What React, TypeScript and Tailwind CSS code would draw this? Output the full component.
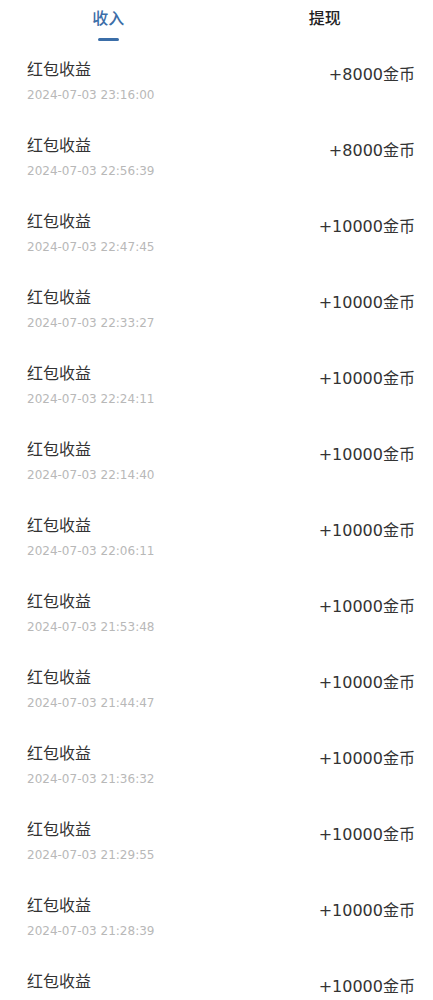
import React from 'react';

const records = [
  { time: '2024-07-03 23:16:00', amount: 8000 },
  { time: '2024-07-03 22:56:39', amount: 8000 },
  { time: '2024-07-03 22:47:45', amount: 10000 },
  { time: '2024-07-03 22:33:27', amount: 10000 },
  { time: '2024-07-03 22:24:11', amount: 10000 },
  { time: '2024-07-03 22:14:40', amount: 10000 },
  { time: '2024-07-03 22:06:11', amount: 10000 },
  { time: '2024-07-03 21:53:48', amount: 10000 },
  { time: '2024-07-03 21:44:47', amount: 10000 },
  { time: '2024-07-03 21:36:32', amount: 10000 },
  { time: '2024-07-03 21:29:55', amount: 10000 },
  { time: '2024-07-03 21:28:39', amount: 10000 },
  { time: '2024-07-03 21:20:15', amount: 10000 },
];

export default function App() {
  return (
    <div
      className="w-[433px] h-[1000px] overflow-hidden bg-white"
      style={{ fontFamily: '"DejaVu Sans", "Noto Sans CJK SC", sans-serif' }}
    >
      {/* Tabs */}
      <div className="flex h-[44px]">
        <div className="flex-1 flex flex-col items-center pt-[7px]">
          <span className="text-[16px] leading-[24px] font-medium text-[#3b6ea8]">收入</span>
          <div className="mt-[7px] w-[21px] h-[3px] rounded-full bg-[#3b6ea8]" />
        </div>
        <div className="flex-1 flex flex-col items-center pt-[7px]">
          <span className="text-[16px] leading-[24px] font-medium text-[#222]">提现</span>
        </div>
      </div>

      {/* Income list */}
      <div className="flex flex-col">
        {records.map((r) => (
          <div key={r.time} className="flex justify-between items-start h-[76px] pl-[27px] pr-[18px] pt-[14px]">
            <div className="flex flex-col">
              <span className="text-[16px] leading-[24px] text-[#333]">红包收益</span>
              <span className="mt-[4px] text-[12px] leading-[18px] text-[#b8b8b8]">{r.time}</span>
            </div>
            <span className="mt-[5px] text-[16px] leading-[24px] text-[#333]">+{r.amount}金币</span>
          </div>
        ))}
      </div>
    </div>
  );
}
